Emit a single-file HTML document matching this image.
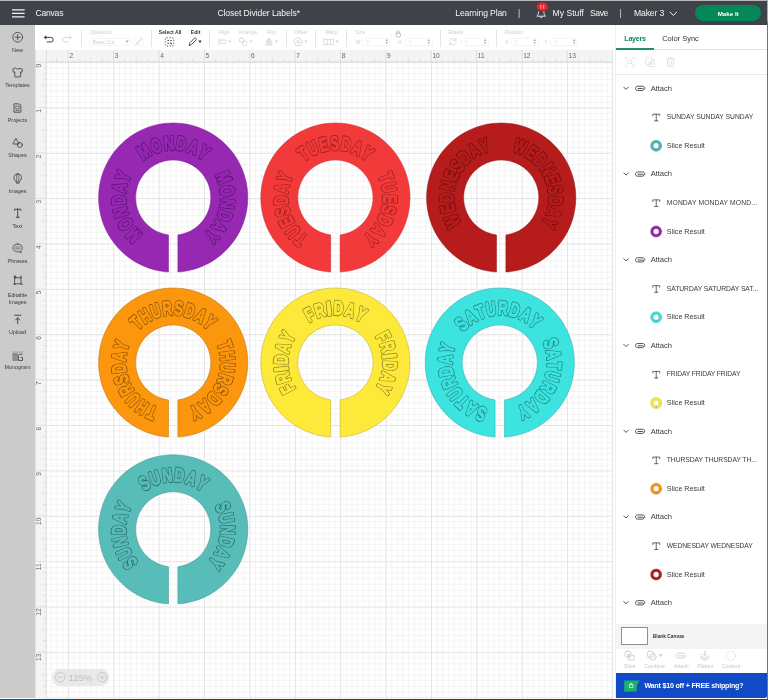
<!DOCTYPE html>
<html><head><meta charset="utf-8">
<style>
*{box-sizing:border-box;margin:0;padding:0}
html,body{width:768px;height:700px;overflow:hidden;background:#fff;-webkit-font-smoothing:antialiased;font-family:"Liberation Sans",sans-serif;}
.abs{position:absolute}
#topedge{left:0;top:0;width:768px;height:1.2px;background:#b9b9b9}
#topbar{left:0;top:1px;width:768px;height:24.4px;background:#3f4349;color:#fff}
#topbar span{position:absolute;white-space:nowrap;font-size:8.6px;line-height:10px;top:7.2px;color:#f4f4f4}
#sidebar{left:0;top:25.4px;width:35px;height:673px;background:#cbcbcb;border-right:1px solid #e3e3e3;box-sizing:content-box}
.sb{position:absolute;margin-top:-24.6px;left:0;width:35px;text-align:center;font-size:5.4px;line-height:7.4px;color:#3c3c3c}
#toolbar{left:35.4px;top:25.4px;width:579px;height:24.8px;background:#fff}
.tl{position:absolute;font-size:5.2px;line-height:6px;color:#cfcfcf;white-space:nowrap}
.tld{color:#333}
.tdiv{position:absolute;top:4.6px;width:1px;height:16.6px;background:#e4e4e4}
.tin{position:absolute;top:12.4px;height:8.4px;border:0.7px solid #f5f5f5;border-radius:1.5px}
#panel{left:615.4px;top:25.4px;width:151.6px;height:673px;background:#fff}
.row{position:absolute;left:0;width:151px;font-size:6.8px;line-height:8px;color:#3a3a3a;white-space:nowrap}
</style></head>
<body>
<div id="wrap" style="position:absolute;left:0;top:0;width:768px;height:700px;will-change:transform">
<!-- canvas -->
<svg class="abs" id="canvas" style="left:35.4px;top:50.2px" width="580" height="649" viewBox="35.4 50.2 580 649">
<defs>
<pattern id="minor" x="68.3" y="62.2" width="5.6725" height="5.6725" patternUnits="userSpaceOnUse">
<path d="M0.25 0V5.6725M0 0.25H5.6725" stroke="#e7e7e7" stroke-width="0.6" fill="none"/>
</pattern>
<pattern id="major" x="68.3" y="62.2" width="45.38" height="45.38" patternUnits="userSpaceOnUse">
<path d="M0.25 0V45.38M0 0.25H45.38" stroke="#d8d8d8" stroke-width="0.7" fill="none"/>
</pattern>
<pattern id="tickx" x="68.3" y="50.2" width="45.38" height="12.2" patternUnits="userSpaceOnUse"><path d="M5.92 10.3V12.2M11.60 8.7V12.2M17.27 10.3V12.2M22.94 7.6V12.2M28.61 10.3V12.2M34.29 8.7V12.2M39.96 10.3V12.2" stroke="#cdcdcd" stroke-width="0.6" fill="none"/></pattern>
<pattern id="ticky" x="35.4" y="62.2" width="11.4" height="45.38" patternUnits="userSpaceOnUse"><path d="M9.5 5.92H11.4M7.9 11.60H11.4M9.5 17.27H11.4M6.8 22.94H11.4M9.5 28.61H11.4M7.9 34.29H11.4M9.5 39.96H11.4" stroke="#cdcdcd" stroke-width="0.6" fill="none"/></pattern>
</defs>
<rect x="35.4" y="50.2" width="580" height="649" fill="#fff"/>
<rect x="46.8" y="62.2" width="566" height="637" fill="url(#minor)"/>
<rect x="46.8" y="62.2" width="566" height="637" fill="url(#major)"/>
<!-- rulers -->
<rect x="35.4" y="50.2" width="577.4" height="12" fill="#f4f4f4"/>
<rect x="35.4" y="50.2" width="11.4" height="649" fill="#f4f4f4"/>
<rect x="46.8" y="50.2" width="566" height="12.2" fill="url(#tickx)"/>
<rect x="35.4" y="62.2" width="11.4" height="637" fill="url(#ticky)"/>
<path d="M46.8 50.2V699M35.4 62.2H612.8" stroke="#d4d4d4" stroke-width="0.7" fill="none"/>
<path d="M612.8 50.2V699" stroke="#dedede" stroke-width="0.8"/>
<path id="majx" stroke="#d6d6d6" stroke-width="0.7" fill="none" d="M68.55 50.2V62.2M113.93 50.2V62.2M159.31 50.2V62.2M204.69 50.2V62.2M250.07 50.2V62.2M295.45 50.2V62.2M340.83 50.2V62.2M386.21 50.2V62.2M431.59 50.2V62.2M476.97 50.2V62.2M522.35 50.2V62.2M567.73 50.2V62.2M35.4 107.83H46.8M35.4 153.21H46.8M35.4 198.59H46.8M35.4 243.97H46.8M35.4 289.35H46.8M35.4 334.73H46.8M35.4 380.11H46.8M35.4 425.49H46.8M35.4 470.87H46.8M35.4 516.25H46.8M35.4 561.63H46.8M35.4 607.01H46.8M35.4 652.39H46.8"/>
<g font-size="6.6" fill="#666" font-family="Liberation Sans, sans-serif" id="rnx">
<text x="69.8" y="57.8">2</text>
<text x="115.2" y="57.8">3</text>
<text x="160.6" y="57.8">4</text>
<text x="205.9" y="57.8">5</text>
<text x="251.3" y="57.8">6</text>
<text x="296.7" y="57.8">7</text>
<text x="342.1" y="57.8">8</text>
<text x="387.5" y="57.8">9</text>
<text x="432.8" y="57.8">10</text>
<text x="478.2" y="57.8">11</text>
<text x="523.6" y="57.8">12</text>
<text x="569.0" y="57.8">13</text>
<text transform="translate(41.7 67.6) rotate(-90)">0</text>
<text transform="translate(41.7 113.0) rotate(-90)">1</text>
<text transform="translate(41.7 158.4) rotate(-90)">2</text>
<text transform="translate(41.7 203.7) rotate(-90)">3</text>
<text transform="translate(41.7 249.1) rotate(-90)">4</text>
<text transform="translate(41.7 294.5) rotate(-90)">5</text>
<text transform="translate(41.7 339.9) rotate(-90)">6</text>
<text transform="translate(41.7 385.3) rotate(-90)">7</text>
<text transform="translate(41.7 430.6) rotate(-90)">8</text>
<text transform="translate(41.7 476.0) rotate(-90)">9</text>
<text transform="translate(41.7 525.1) rotate(-90)">10</text>
<text transform="translate(41.7 570.5) rotate(-90)">11</text>
<text transform="translate(41.7 615.9) rotate(-90)">12</text>
<text transform="translate(41.7 661.2) rotate(-90)">13</text>
</g>
<!--RINGS-->
<path d="M178.30 272.25A74.6 74.6 0 1 0 168.90 272.25L168.90 235.11A37.6 37.6 0 1 1 178.30 235.11Z" fill="#9628b2" stroke="#7a1d95" stroke-width="0.5"/>
<g font-size="19.5" font-weight="bold" text-anchor="middle" font-family="Liberation Sans, sans-serif" stroke-linejoin="round">
<g id="tMON">
<text transform="translate(173.6 197.8) rotate(-133.50) translate(0 -47.8) scale(0.702 1)">M</text>
<text transform="translate(173.6 197.8) rotate(-119.00) translate(0 -47.8) scale(0.702 1)">O</text>
<text transform="translate(173.6 197.8) rotate(-105.50) translate(0 -47.8) scale(0.702 1)">N</text>
<text transform="translate(173.6 197.8) rotate(-92.51) translate(0 -47.8) scale(0.702 1)">D</text>
<text transform="translate(173.6 197.8) rotate(-79.51) translate(0 -47.8) scale(0.702 1)">A</text>
<text transform="translate(173.6 197.8) rotate(-67.00) translate(0 -47.8) scale(0.702 1)">Y</text>
<text transform="translate(173.6 197.8) rotate(-32.50) translate(0 -47.8) scale(0.702 1)">M</text>
<text transform="translate(173.6 197.8) rotate(-18.00) translate(0 -47.8) scale(0.702 1)">O</text>
<text transform="translate(173.6 197.8) rotate(-4.50) translate(0 -47.8) scale(0.702 1)">N</text>
<text transform="translate(173.6 197.8) rotate(8.49) translate(0 -47.8) scale(0.702 1)">D</text>
<text transform="translate(173.6 197.8) rotate(21.49) translate(0 -47.8) scale(0.702 1)">A</text>
<text transform="translate(173.6 197.8) rotate(34.00) translate(0 -47.8) scale(0.702 1)">Y</text>
<text transform="translate(173.6 197.8) rotate(68.50) translate(0 -47.8) scale(0.702 1)">M</text>
<text transform="translate(173.6 197.8) rotate(83.00) translate(0 -47.8) scale(0.702 1)">O</text>
<text transform="translate(173.6 197.8) rotate(96.50) translate(0 -47.8) scale(0.702 1)">N</text>
<text transform="translate(173.6 197.8) rotate(109.49) translate(0 -47.8) scale(0.702 1)">D</text>
<text transform="translate(173.6 197.8) rotate(122.49) translate(0 -47.8) scale(0.702 1)">A</text>
<text transform="translate(173.6 197.8) rotate(135.00) translate(0 -47.8) scale(0.702 1)">Y</text>
</g>
<use href="#tMON" fill="#5a1270" stroke="#5a1270" stroke-width="2.85"/>
<use href="#tMON" fill="#9628b2" stroke="#9628b2" stroke-width="1.15"/>
</g>
<path d="M340.50 272.25A74.6 74.6 0 1 0 331.10 272.25L331.10 235.11A37.6 37.6 0 1 1 340.50 235.11Z" fill="#f23a3a" stroke="#c82c2c" stroke-width="0.5"/>
<g font-size="19.5" font-weight="bold" text-anchor="middle" font-family="Liberation Sans, sans-serif" stroke-linejoin="round">
<g id="tTUE">
<text transform="translate(335.8 197.8) rotate(-140.19) translate(0 -47.8) scale(0.678 1)">T</text>
<text transform="translate(335.8 197.8) rotate(-128.62) translate(0 -47.8) scale(0.678 1)">U</text>
<text transform="translate(335.8 197.8) rotate(-116.55) translate(0 -47.8) scale(0.678 1)">E</text>
<text transform="translate(335.8 197.8) rotate(-104.97) translate(0 -47.8) scale(0.678 1)">S</text>
<text transform="translate(335.8 197.8) rotate(-92.90) translate(0 -47.8) scale(0.678 1)">D</text>
<text transform="translate(335.8 197.8) rotate(-80.36) translate(0 -47.8) scale(0.678 1)">A</text>
<text transform="translate(335.8 197.8) rotate(-68.29) translate(0 -47.8) scale(0.678 1)">Y</text>
<text transform="translate(335.8 197.8) rotate(-36.19) translate(0 -47.8) scale(0.678 1)">T</text>
<text transform="translate(335.8 197.8) rotate(-24.62) translate(0 -47.8) scale(0.678 1)">U</text>
<text transform="translate(335.8 197.8) rotate(-12.55) translate(0 -47.8) scale(0.678 1)">E</text>
<text transform="translate(335.8 197.8) rotate(-0.97) translate(0 -47.8) scale(0.678 1)">S</text>
<text transform="translate(335.8 197.8) rotate(11.10) translate(0 -47.8) scale(0.678 1)">D</text>
<text transform="translate(335.8 197.8) rotate(23.64) translate(0 -47.8) scale(0.678 1)">A</text>
<text transform="translate(335.8 197.8) rotate(35.71) translate(0 -47.8) scale(0.678 1)">Y</text>
<text transform="translate(335.8 197.8) rotate(67.81) translate(0 -47.8) scale(0.678 1)">T</text>
<text transform="translate(335.8 197.8) rotate(79.38) translate(0 -47.8) scale(0.678 1)">U</text>
<text transform="translate(335.8 197.8) rotate(91.45) translate(0 -47.8) scale(0.678 1)">E</text>
<text transform="translate(335.8 197.8) rotate(103.03) translate(0 -47.8) scale(0.678 1)">S</text>
<text transform="translate(335.8 197.8) rotate(115.10) translate(0 -47.8) scale(0.678 1)">D</text>
<text transform="translate(335.8 197.8) rotate(127.64) translate(0 -47.8) scale(0.678 1)">A</text>
<text transform="translate(335.8 197.8) rotate(139.71) translate(0 -47.8) scale(0.678 1)">Y</text>
</g>
<use href="#tTUE" fill="#9c1f1f" stroke="#9c1f1f" stroke-width="2.85"/>
<use href="#tTUE" fill="#f23a3a" stroke="#f23a3a" stroke-width="1.15"/>
</g>
<path d="M506.30 272.25A74.6 74.6 0 1 0 496.90 272.25L496.90 235.11A37.6 37.6 0 1 1 506.30 235.11Z" fill="#b71c1c" stroke="#8e1414" stroke-width="0.5"/>
<g font-size="19.5" font-weight="bold" text-anchor="middle" font-family="Liberation Sans, sans-serif" stroke-linejoin="round">
<g id="tWED">
<text transform="translate(501.6 197.8) rotate(-115.44) translate(0 -47.8) scale(0.666 1)">W</text>
<text transform="translate(501.6 197.8) rotate(-101.69) translate(0 -47.8) scale(0.666 1)">E</text>
<text transform="translate(501.6 197.8) rotate(-89.83) translate(0 -47.8) scale(0.666 1)">D</text>
<text transform="translate(501.6 197.8) rotate(-77.50) translate(0 -47.8) scale(0.666 1)">N</text>
<text transform="translate(501.6 197.8) rotate(-65.64) translate(0 -47.8) scale(0.666 1)">E</text>
<text transform="translate(501.6 197.8) rotate(-54.25) translate(0 -47.8) scale(0.666 1)">S</text>
<text transform="translate(501.6 197.8) rotate(-42.39) translate(0 -47.8) scale(0.666 1)">D</text>
<text transform="translate(501.6 197.8) rotate(-30.06) translate(0 -47.8) scale(0.666 1)">A</text>
<text transform="translate(501.6 197.8) rotate(-18.19) translate(0 -47.8) scale(0.666 1)">Y</text>
<text transform="translate(501.6 197.8) rotate(20.56) translate(0 -47.8) scale(0.666 1)">W</text>
<text transform="translate(501.6 197.8) rotate(34.31) translate(0 -47.8) scale(0.666 1)">E</text>
<text transform="translate(501.6 197.8) rotate(46.17) translate(0 -47.8) scale(0.666 1)">D</text>
<text transform="translate(501.6 197.8) rotate(58.50) translate(0 -47.8) scale(0.666 1)">N</text>
<text transform="translate(501.6 197.8) rotate(70.36) translate(0 -47.8) scale(0.666 1)">E</text>
<text transform="translate(501.6 197.8) rotate(81.75) translate(0 -47.8) scale(0.666 1)">S</text>
<text transform="translate(501.6 197.8) rotate(93.61) translate(0 -47.8) scale(0.666 1)">D</text>
<text transform="translate(501.6 197.8) rotate(105.94) translate(0 -47.8) scale(0.666 1)">A</text>
<text transform="translate(501.6 197.8) rotate(117.81) translate(0 -47.8) scale(0.666 1)">Y</text>
</g>
<use href="#tWED" fill="#6e0d0d" stroke="#6e0d0d" stroke-width="2.85"/>
<use href="#tWED" fill="#b71c1c" stroke="#b71c1c" stroke-width="1.15"/>
</g>
<path d="M178.30 437.25A74.6 74.6 0 1 0 168.90 437.25L168.90 400.11A37.6 37.6 0 1 1 178.30 400.11Z" fill="#fc960c" stroke="#b86c08" stroke-width="0.5"/>
<g font-size="19.5" font-weight="bold" text-anchor="middle" font-family="Liberation Sans, sans-serif" stroke-linejoin="round">
<g id="tTHU">
<text transform="translate(173.6 362.8) rotate(-156.72) translate(0 -47.8) scale(0.674 1)">T</text>
<text transform="translate(173.6 362.8) rotate(-145.21) translate(0 -47.8) scale(0.674 1)">H</text>
<text transform="translate(173.6 362.8) rotate(-132.73) translate(0 -47.8) scale(0.674 1)">U</text>
<text transform="translate(173.6 362.8) rotate(-120.25) translate(0 -47.8) scale(0.674 1)">R</text>
<text transform="translate(173.6 362.8) rotate(-108.25) translate(0 -47.8) scale(0.674 1)">S</text>
<text transform="translate(173.6 362.8) rotate(-96.24) translate(0 -47.8) scale(0.674 1)">D</text>
<text transform="translate(173.6 362.8) rotate(-83.76) translate(0 -47.8) scale(0.674 1)">A</text>
<text transform="translate(173.6 362.8) rotate(-71.76) translate(0 -47.8) scale(0.674 1)">Y</text>
<text transform="translate(173.6 362.8) rotate(-42.72) translate(0 -47.8) scale(0.674 1)">T</text>
<text transform="translate(173.6 362.8) rotate(-31.21) translate(0 -47.8) scale(0.674 1)">H</text>
<text transform="translate(173.6 362.8) rotate(-18.73) translate(0 -47.8) scale(0.674 1)">U</text>
<text transform="translate(173.6 362.8) rotate(-6.25) translate(0 -47.8) scale(0.674 1)">R</text>
<text transform="translate(173.6 362.8) rotate(5.75) translate(0 -47.8) scale(0.674 1)">S</text>
<text transform="translate(173.6 362.8) rotate(17.76) translate(0 -47.8) scale(0.674 1)">D</text>
<text transform="translate(173.6 362.8) rotate(30.24) translate(0 -47.8) scale(0.674 1)">A</text>
<text transform="translate(173.6 362.8) rotate(42.24) translate(0 -47.8) scale(0.674 1)">Y</text>
<text transform="translate(173.6 362.8) rotate(71.28) translate(0 -47.8) scale(0.674 1)">T</text>
<text transform="translate(173.6 362.8) rotate(82.79) translate(0 -47.8) scale(0.674 1)">H</text>
<text transform="translate(173.6 362.8) rotate(95.27) translate(0 -47.8) scale(0.674 1)">U</text>
<text transform="translate(173.6 362.8) rotate(107.75) translate(0 -47.8) scale(0.674 1)">R</text>
<text transform="translate(173.6 362.8) rotate(119.75) translate(0 -47.8) scale(0.674 1)">S</text>
<text transform="translate(173.6 362.8) rotate(131.76) translate(0 -47.8) scale(0.674 1)">D</text>
<text transform="translate(173.6 362.8) rotate(144.24) translate(0 -47.8) scale(0.674 1)">A</text>
<text transform="translate(173.6 362.8) rotate(156.24) translate(0 -47.8) scale(0.674 1)">Y</text>
</g>
<use href="#tTHU" fill="#8a5208" stroke="#8a5208" stroke-width="2.85"/>
<use href="#tTHU" fill="#fc960c" stroke="#fc960c" stroke-width="1.15"/>
</g>
<path d="M340.50 437.25A74.6 74.6 0 1 0 331.10 437.25L331.10 400.11A37.6 37.6 0 1 1 340.50 400.11Z" fill="#fde93a" stroke="#b9aa28" stroke-width="0.5"/>
<g font-size="19.5" font-weight="bold" text-anchor="middle" font-family="Liberation Sans, sans-serif" stroke-linejoin="round">
<g id="tFRI">
<text transform="translate(335.8 362.8) rotate(-118.63) translate(0 -47.8) scale(0.687 1)">F</text>
<text transform="translate(335.8 362.8) rotate(-106.90) translate(0 -47.8) scale(0.687 1)">R</text>
<text transform="translate(335.8 362.8) rotate(-96.85) translate(0 -47.8) scale(0.927 1)">I</text>
<text transform="translate(335.8 362.8) rotate(-86.80) translate(0 -47.8) scale(0.687 1)">D</text>
<text transform="translate(335.8 362.8) rotate(-74.09) translate(0 -47.8) scale(0.687 1)">A</text>
<text transform="translate(335.8 362.8) rotate(-61.87) translate(0 -47.8) scale(0.687 1)">Y</text>
<text transform="translate(335.8 362.8) rotate(-28.63) translate(0 -47.8) scale(0.687 1)">F</text>
<text transform="translate(335.8 362.8) rotate(-16.90) translate(0 -47.8) scale(0.687 1)">R</text>
<text transform="translate(335.8 362.8) rotate(-6.85) translate(0 -47.8) scale(0.927 1)">I</text>
<text transform="translate(335.8 362.8) rotate(3.20) translate(0 -47.8) scale(0.687 1)">D</text>
<text transform="translate(335.8 362.8) rotate(15.91) translate(0 -47.8) scale(0.687 1)">A</text>
<text transform="translate(335.8 362.8) rotate(28.13) translate(0 -47.8) scale(0.687 1)">Y</text>
<text transform="translate(335.8 362.8) rotate(61.37) translate(0 -47.8) scale(0.687 1)">F</text>
<text transform="translate(335.8 362.8) rotate(73.10) translate(0 -47.8) scale(0.687 1)">R</text>
<text transform="translate(335.8 362.8) rotate(83.15) translate(0 -47.8) scale(0.927 1)">I</text>
<text transform="translate(335.8 362.8) rotate(93.20) translate(0 -47.8) scale(0.687 1)">D</text>
<text transform="translate(335.8 362.8) rotate(105.91) translate(0 -47.8) scale(0.687 1)">A</text>
<text transform="translate(335.8 362.8) rotate(118.13) translate(0 -47.8) scale(0.687 1)">Y</text>
</g>
<use href="#tFRI" fill="#8f8420" stroke="#8f8420" stroke-width="2.85"/>
<use href="#tFRI" fill="#fde93a" stroke="#fde93a" stroke-width="1.15"/>
</g>
<path d="M504.90 437.25A74.6 74.6 0 1 0 495.50 437.25L495.50 400.11A37.6 37.6 0 1 1 504.90 400.11Z" fill="#3de3df" stroke="#2aa9a6" stroke-width="0.5"/>
<g font-size="19.5" font-weight="bold" text-anchor="middle" font-family="Liberation Sans, sans-serif" stroke-linejoin="round">
<g id="tSAT">
<text transform="translate(500.2 362.8) rotate(-160.18) translate(0 -47.8) scale(0.681 1)">S</text>
<text transform="translate(500.2 362.8) rotate(-148.05) translate(0 -47.8) scale(0.681 1)">A</text>
<text transform="translate(500.2 362.8) rotate(-136.41) translate(0 -47.8) scale(0.681 1)">T</text>
<text transform="translate(500.2 362.8) rotate(-124.78) translate(0 -47.8) scale(0.681 1)">U</text>
<text transform="translate(500.2 362.8) rotate(-112.17) translate(0 -47.8) scale(0.681 1)">R</text>
<text transform="translate(500.2 362.8) rotate(-99.56) translate(0 -47.8) scale(0.681 1)">D</text>
<text transform="translate(500.2 362.8) rotate(-86.95) translate(0 -47.8) scale(0.681 1)">A</text>
<text transform="translate(500.2 362.8) rotate(-74.82) translate(0 -47.8) scale(0.681 1)">Y</text>
<text transform="translate(500.2 362.8) rotate(-44.68) translate(0 -47.8) scale(0.681 1)">S</text>
<text transform="translate(500.2 362.8) rotate(-32.55) translate(0 -47.8) scale(0.681 1)">A</text>
<text transform="translate(500.2 362.8) rotate(-20.91) translate(0 -47.8) scale(0.681 1)">T</text>
<text transform="translate(500.2 362.8) rotate(-9.28) translate(0 -47.8) scale(0.681 1)">U</text>
<text transform="translate(500.2 362.8) rotate(3.33) translate(0 -47.8) scale(0.681 1)">R</text>
<text transform="translate(500.2 362.8) rotate(15.94) translate(0 -47.8) scale(0.681 1)">D</text>
<text transform="translate(500.2 362.8) rotate(28.55) translate(0 -47.8) scale(0.681 1)">A</text>
<text transform="translate(500.2 362.8) rotate(40.68) translate(0 -47.8) scale(0.681 1)">Y</text>
<text transform="translate(500.2 362.8) rotate(69.32) translate(0 -47.8) scale(0.681 1)">S</text>
<text transform="translate(500.2 362.8) rotate(81.45) translate(0 -47.8) scale(0.681 1)">A</text>
<text transform="translate(500.2 362.8) rotate(93.09) translate(0 -47.8) scale(0.681 1)">T</text>
<text transform="translate(500.2 362.8) rotate(104.72) translate(0 -47.8) scale(0.681 1)">U</text>
<text transform="translate(500.2 362.8) rotate(117.33) translate(0 -47.8) scale(0.681 1)">R</text>
<text transform="translate(500.2 362.8) rotate(129.94) translate(0 -47.8) scale(0.681 1)">D</text>
<text transform="translate(500.2 362.8) rotate(142.55) translate(0 -47.8) scale(0.681 1)">A</text>
<text transform="translate(500.2 362.8) rotate(154.68) translate(0 -47.8) scale(0.681 1)">Y</text>
</g>
<use href="#tSAT" fill="#1f8684" stroke="#1f8684" stroke-width="2.85"/>
<use href="#tSAT" fill="#3de3df" stroke="#3de3df" stroke-width="1.15"/>
</g>
<path d="M178.30 604.05A74.6 74.6 0 1 0 168.90 604.05L168.90 566.91A37.6 37.6 0 1 1 178.30 566.91Z" fill="#58bdb9" stroke="#3f8f8c" stroke-width="0.5"/>
<g font-size="19.5" font-weight="bold" text-anchor="middle" font-family="Liberation Sans, sans-serif" stroke-linejoin="round">
<g id="tSUN">
<text transform="translate(173.6 529.6) rotate(-128.16) translate(0 -47.8) scale(0.684 1)">S</text>
<text transform="translate(173.6 529.6) rotate(-115.98) translate(0 -47.8) scale(0.684 1)">U</text>
<text transform="translate(173.6 529.6) rotate(-103.33) translate(0 -47.8) scale(0.684 1)">N</text>
<text transform="translate(173.6 529.6) rotate(-90.67) translate(0 -47.8) scale(0.684 1)">D</text>
<text transform="translate(173.6 529.6) rotate(-78.02) translate(0 -47.8) scale(0.684 1)">A</text>
<text transform="translate(173.6 529.6) rotate(-65.84) translate(0 -47.8) scale(0.684 1)">Y</text>
<text transform="translate(173.6 529.6) rotate(-32.00) translate(0 -47.8) scale(0.702 1)">S</text>
<text transform="translate(173.6 529.6) rotate(-19.50) translate(0 -47.8) scale(0.702 1)">U</text>
<text transform="translate(173.6 529.6) rotate(-6.50) translate(0 -47.8) scale(0.702 1)">N</text>
<text transform="translate(173.6 529.6) rotate(6.50) translate(0 -47.8) scale(0.702 1)">D</text>
<text transform="translate(173.6 529.6) rotate(19.50) translate(0 -47.8) scale(0.702 1)">A</text>
<text transform="translate(173.6 529.6) rotate(32.00) translate(0 -47.8) scale(0.702 1)">Y</text>
<text transform="translate(173.6 529.6) rotate(65.84) translate(0 -47.8) scale(0.684 1)">S</text>
<text transform="translate(173.6 529.6) rotate(78.02) translate(0 -47.8) scale(0.684 1)">U</text>
<text transform="translate(173.6 529.6) rotate(90.67) translate(0 -47.8) scale(0.684 1)">N</text>
<text transform="translate(173.6 529.6) rotate(103.33) translate(0 -47.8) scale(0.684 1)">D</text>
<text transform="translate(173.6 529.6) rotate(115.98) translate(0 -47.8) scale(0.684 1)">A</text>
<text transform="translate(173.6 529.6) rotate(128.16) translate(0 -47.8) scale(0.684 1)">Y</text>
</g>
<use href="#tSUN" fill="#2c6e6b" stroke="#2c6e6b" stroke-width="2.85"/>
<use href="#tSUN" fill="#58bdb9" stroke="#58bdb9" stroke-width="1.15"/>
</g>

<!--/RINGS-->
</svg>

<div class="abs" style="left:51.6px;top:669.4px;width:57.8px;height:16.4px;border-radius:8.2px;background:rgba(228,228,228,0.82)"></div>
<svg class="abs" style="left:51.6px;top:669.4px" width="58" height="17" viewBox="51.6 669.4 58 17" fill="none" stroke="#c2c2c2" stroke-width="0.8"><circle cx="59.8" cy="677.6" r="4.7"/><path d="M57.4 677.6H62.2"/><circle cx="101.9" cy="677.6" r="4.7"/><path d="M99.5 677.6H104.3M101.9 675.2V680"/></svg>
<div class="row" style="left:68.4px;top:672.7px;width:auto;font-size:9.3px;line-height:10px;color:#bdbdbd">125%</div>
<div class="abs" id="topedge"></div>
<div class="abs" id="topbar">
<svg class="abs" style="left:11.5px;top:7.8px" width="13" height="9" viewBox="0 0 13 9"><path d="M0 0.9H12.6M0 4.4H12.6M0 7.9H12.6" stroke="#f2f2f2" stroke-width="1.3"/></svg>
<span style="letter-spacing:-0.22px;left:35.4px">Canvas</span>
<span style="letter-spacing:-0.09px;left:217.4px">Closet Divider Labels*</span>
<span style="left:455.3px;letter-spacing:-0.12px">Learning Plan</span>
<span style="left:518px;color:#ddd">|</span>
<svg class="abs" style="left:534px;top:0px" width="18" height="20" viewBox="534 1 18 20" fill="none"><path d="M538.6 11.4C538.6 14 537.6 15.6 536.8 16.2H545.6C544.8 15.6 543.8 14 543.8 11.4M540 16.6C540.4 18 542 18 542.4 16.6" stroke="#f0f0f0" stroke-width="0.9" stroke-linejoin="round"/><ellipse cx="542.3" cy="6.8" rx="5.8" ry="4.3" fill="#e8232a"/><path d="M540.9 4.9V8.7M543.7 4.9V8.7" stroke="#f3c9b5" stroke-width="0.9"/></svg>
<span style="left:552.6px">My Stuff</span>
<span style="letter-spacing:-0.4px;left:590px">Save</span>
<span style="left:619.6px;color:#ddd">|</span>
<span style="letter-spacing:-0.14px;left:634px">Maker 3</span>
<svg class="abs" style="left:668.5px;top:9.8px" width="9" height="6" viewBox="0 0 9 6"><path d="M0.8 0.8L4.4 4.4L8 0.8" stroke="#eee" stroke-width="1" fill="none"/></svg>
<div class="abs" style="left:695px;top:4px;width:66.4px;height:16px;border-radius:8px;background:#05875a"></div>
<span style="left:695px;width:66.4px;text-align:center;font-weight:bold;font-size:6.2px;color:#fff;top:7.8px">Make It</span>
</div>

<div class="abs" id="sidebar">
<svg class="abs" style="left:0;top:0" width="35.4" height="360" viewBox="0 25.4 35.4 360" fill="none" stroke="#3a3a3a" stroke-width="0.8" stroke-linecap="round" stroke-linejoin="round">
<!-- New -->
<circle cx="17.7" cy="37.6" r="4.9"/><path d="M17.7 35V40.2M15.1 37.6H20.3"/>
<!-- Templates -->
<path d="M15.4 68.6C16.4 69.6 19 69.6 20 68.6L22.6 69.9L21.9 72.6L20.6 72.2V77.3H14.8V72.2L13.5 72.6L12.8 69.9Z"/>
<!-- Projects -->
<path d="M14.4 104.2H18.6L20.9 105.5V112.6H14.4Z"/><rect x="16.2" y="106.4" width="2.9" height="2.9" stroke-width="0.6"/><path d="M15.9 110.9H19.4" stroke-width="0.6"/>
<!-- Shapes -->
<path d="M16.2 139.2L19.2 144.4H13.2Z"/><circle cx="19.8" cy="145.3" r="2.5"/>
<!-- Images -->
<path d="M17.7 174.3C20.2 174.3 21.5 176 21.5 178C21.5 180 19.6 181.4 19.2 182.6H16.2C15.8 181.4 13.9 180 13.9 178C13.9 176 15.2 174.3 17.7 174.3Z"/><path d="M16.6 174.6V182.4M18.8 174.6V182.4M16.3 183.7H19.1" stroke-width="0.6"/>
<!-- Text -->
<path d="M14.5 210.8V209.6H20.9V210.8M17.7 209.6V217.6M16.2 217.7H19.2" stroke-width="0.9"/>
<!-- Phrases -->
<path d="M17.6 244.4C20.4 244.4 22.2 246 22.2 248.3C22.2 249.6 21.6 250.6 20.7 251.3L21.2 253.2L19.2 252.1C18.7 252.2 18.2 252.3 17.6 252.3C14.8 252.3 13 250.6 13 248.3C13 246 14.8 244.4 17.6 244.4Z"/><path d="M15.3 247.4H19.9M15.3 249.3H19.9" stroke-width="0.6"/>
<!-- Editable -->
<rect x="15" y="278.2" width="6" height="6" /><path d="M13.7 284.6H15.3M20.9 284.6H22.4M21 276.6V278.4M15 276.2V278.6M13.9 277.4H16.1" stroke-width="1"/>
<!-- Upload -->
<path d="M14.6 315.7H20.8M17.7 324V318.4M15.6 320.4L17.7 318.3L19.8 320.4" stroke-width="0.9"/>
<!-- Monogram -->
<path d="M12.7 352.5H22.6" stroke="#8a8a8a" stroke-width="0.7"/><path d="M12.3 354H17.9V361.4H12.3Z" fill="#8d8d8d" stroke="none"/><path d="M12.8 354.5H17" stroke="#6a6a6a" stroke-width="0.7"/><path d="M22.6 354.7H19.6C18.8 354.7 18.5 355.1 18.5 355.8V360.9H22.5V357.8H20.7" stroke="#555" stroke-width="1" stroke-linecap="butt"/>
</svg>
<div class="sb" style="top:45.9px">New</div>
<div class="sb" style="top:81.3px">Templates</div>
<div class="sb" style="top:116.3px">Projects</div>
<div class="sb" style="top:151.7px">Shapes</div>
<div class="sb" style="top:187.1px">Images</div>
<div class="sb" style="top:222.5px">Text</div>
<div class="sb" style="top:257.7px">Phrases</div>
<div class="sb" style="top:291.1px">Editable<br>Images</div>
<div class="sb" style="top:328.4px">Upload</div>
<div class="sb" style="top:363.5px">Monogram</div>
</div>
<div class="abs" id="toolbar">
<svg class="abs" style="left:0;top:0" width="579" height="24.8" viewBox="35.4 25.4 579 24.8" fill="none" stroke-linecap="round" stroke-linejoin="round">
<!-- undo / redo -->
<path d="M46.2 37.8H51.3A2.3 2.3 0 0 1 51.3 42.4H47.6" stroke="#3a3a3a" stroke-width="0.95"/><path d="M44 37.8L46.7 35.6V40Z" fill="#3a3a3a" stroke="none"/>
<path d="M70.4 37.8H65.3A2.3 2.3 0 0 0 65.3 42.4H69" stroke="#d6d6d6" stroke-width="0.95"/><path d="M72.6 37.8L69.9 35.6V40Z" fill="#dcdcdc" stroke="none"/>
<!-- swatch -->
<rect x="134.8" y="37.8" width="9" height="8.4" rx="1" stroke="#f0f0f0" stroke-width="0.7"/>
<path d="M136.3 44.9L142.4 39" stroke="#cdbd94" stroke-width="0.9"/>
<path d="M125.9 40.9H129.1L127.5 43.6Z" fill="#b5b5b5" stroke="none"/>
<!-- select all -->
<rect x="165.7" y="38.2" width="8.4" height="8.2" rx="1.2" stroke="#333" stroke-width="0.8" stroke-dasharray="1.3 1.5" stroke-linecap="butt"/>
<g fill="#3a3a3a" stroke="none"><circle cx="168.5" cy="40.9" r="0.75"/><circle cx="171.3" cy="40.9" r="0.75"/><circle cx="168.5" cy="43.7" r="0.75"/><circle cx="171.3" cy="43.7" r="0.75"/><path d="M170.8 43.4L172.6 44.2L171.6 45.2Z"/></g>
<!-- edit pencil -->
<path d="M189.6 45.6L190.3 43.2L194.9 38.6C195.7 37.8 197.4 39.4 196.6 40.2L192 44.8Z" stroke="#333" stroke-width="0.85"/>
<path d="M198.8 40.9H202.0L200.4 43.6Z" fill="#333" stroke="none"/>
<!-- align -->
<g stroke="#d2d2d2" stroke-width="0.75">
<path d="M219.2 38.6V45.6"/><rect x="220.9" y="40.4" width="5.2" height="3.4" rx="0.5"/>
<!-- arrange -->
<rect x="240" y="38.6" width="4.3" height="4.3" rx="1.2"/><rect x="242.8" y="41.6" width="4.3" height="4.3" rx="1.2"/>
<!-- flip -->
<path d="M269.4 38.3V46M268.1 39.6L266.1 45.4H268.1ZM270.7 39.6L272.7 45.4H270.7Z"/>
<!-- offset -->
<path d="M298.8 38L303.2 41.2L301.6 46H296L294.4 41.2Z"/><circle cx="298.8" cy="42.4" r="1.5"/>
<!-- warp -->
<path d="M324.6 39.4C327 40.4 331.4 40.4 333.8 39.4V45.4C331.4 44.4 327 44.4 324.6 45.4ZM327.6 40V44.8M330.8 40V44.8"/>
<!-- rotate -->
<path d="M450 41.2C450.6 38.4 455 38 456.2 40.6M456.4 38.8V40.8H454.4M456.4 43.2C455.8 46 451.4 46.4 450.2 43.8M450 45.6V43.6H452"/>
<!-- lock -->
<rect x="396.4" y="33.6" width="4.4" height="3.7" rx="0.6" stroke="#b4b4b4"/><path d="M397.4 33.5V32.4C397.4 30.6 399.8 30.6 399.8 32.4V33.5" stroke="#b4b4b4"/>
<path d="M391.2 35.4H392.4M404 35.4H405.2" stroke="#d8d8d8" stroke-width="0.5"/>
</g>
<g fill="#d6d6d6" stroke="none">
<path d="M228.4 40.9H231.6L230.0 43.6Z"/><path d="M249.6 40.9H252.8L251.2 43.6Z"/><path d="M275.2 40.9H278.4L276.8 43.6Z"/><path d="M304.6 40.9H307.8L306.2 43.6Z"/><path d="M335.8 40.9H339.0L337.4 43.6Z"/>
</g>
<!-- spinners -->
<g fill="#a8a8a8" stroke="none">
<path d="M385.9 41.3L387.2 39.5L388.5 41.3ZM385.9 42.7L387.2 44.5L388.5 42.7Z"/>
<path d="M427.9 41.3L429.2 39.5L430.5 41.3ZM427.9 42.7L429.2 44.5L430.5 42.7Z"/>
<path d="M484.3 41.3L485.6 39.5L486.9 41.3ZM484.3 42.7L485.6 44.5L486.9 42.7Z"/>
<path d="M533.9 41.3L535.2 39.5L536.5 41.3ZM533.9 42.7L535.2 44.5L536.5 42.7Z"/>
<path d="M573.3 41.3L574.6 39.5L575.9 41.3ZM573.3 42.7L574.6 44.5L575.9 42.7Z"/>
</g>
</svg>
<div class="tdiv" style="left:45.4px"></div>
<div class="tdiv" style="left:115.7px"></div>
<div class="tdiv" style="left:173.5px"></div>
<div class="tdiv" style="left:250.3px"></div>
<div class="tdiv" style="left:279.6px"></div>
<div class="tdiv" style="left:310.8px"></div>
<div class="tdiv" style="left:404.4px"></div>
<div class="tdiv" style="left:460.6px"></div>
<div class="tl" style="left:54.2px;top:3.9px">Operation</div>
<div class="tin" style="left:54px;width:42px"></div>
<div class="tl" style="left:57px;top:13.7px">Basic Cut</div>
<div class="tl tld" style="left:123.4px;top:3.9px;font-weight:bold;font-size:5.1px">Select All</div>
<div class="tl tld" style="left:155.4px;top:3.9px;font-weight:bold;font-size:5.1px">Edit</div>
<div class="tl" style="left:182.8px;top:3.9px">Align</div>
<div class="tl" style="left:203.2px;top:3.9px">Arrange</div>
<div class="tl" style="left:231.8px;top:3.9px">Flip</div>
<div class="tl" style="left:258.4px;top:3.9px">Offset</div>
<div class="tl" style="left:290px;top:3.9px">Warp</div>
<div class="tl" style="left:330.6px;top:13.7px;color:#e6e6e6">0</div>
<div class="tl" style="left:373.2px;top:13.7px;color:#e6e6e6">0</div>
<div class="tl" style="left:429.2px;top:13.7px;color:#e6e6e6">0</div>
<div class="tl" style="left:479.6px;top:13.7px;color:#e6e6e6">0</div>
<div class="tl" style="left:519.0px;top:13.7px;color:#e6e6e6">0</div>
<div class="tl" style="left:319.6px;top:3.9px">Size</div>
<div class="tl" style="left:320px;top:13.7px">W</div>
<div class="tin" style="left:326.6px;width:27.6px"></div>
<div class="tl" style="left:362.6px;top:13.7px">H</div>
<div class="tin" style="left:369.6px;width:27.6px"></div>
<div class="tl" style="left:412.8px;top:3.9px">Rotate</div>
<div class="tin" style="left:425.2px;width:28.6px"></div>
<div class="tl" style="left:469px;top:3.9px">Position</div>
<div class="tl" style="left:469.6px;top:13.7px">X</div>
<div class="tin" style="left:475.6px;width:27.6px"></div>
<div class="tl" style="left:508.8px;top:13.7px">Y</div>
<div class="tin" style="left:514.6px;width:28px"></div>
</div>
<div class="abs" id="panel"></div>
<div class="abs" style="left:615px;top:25.4px;width:1px;height:673px;background:#f0f0f0"></div>
<!-- tabs -->
<div class="row" style="left:624.3px;top:34.6px;font-size:7.2px;letter-spacing:-0.3px;font-weight:bold;color:#17866a">Layers</div>
<div class="row" style="left:662.2px;top:34.6px;font-size:7.5px;color:#333">Color Sync</div>
<div class="abs" style="left:615.4px;top:49.1px;width:151.6px;height:0.8px;background:#e2e2e2"></div>
<div class="abs" style="left:616px;top:48px;width:38px;height:2px;background:#1f8c70"></div>
<div class="abs" style="left:615.4px;top:73.8px;width:151.6px;height:0.8px;background:#e8e8e8"></div>
<svg class="abs" style="left:615.4px;top:50px" width="151.6" height="24" viewBox="615.4 50 151.6 24" fill="none" stroke="#dcdcdc" stroke-width="0.8" stroke-linecap="round" stroke-linejoin="round">
<path d="M626 59.4V57.6H627.8M633 57.6H634.8V59.4M634.8 64.6V66.4H633M627.8 66.4H626V64.6"/><circle cx="630.2" cy="61.8" r="2"/><path d="M631.7 63.3L633 64.6"/>
<rect x="646.2" y="57.4" width="6" height="7" rx="0.8"/><path d="M648.4 64.6V66.6H654.6V59.6H652.4M650.6 61.4V64.4M649.1 62.9H652.1"/>
<path d="M666.6 59.2H675.2M669.2 59V57.6H672.6V59M667.6 59.4L668.2 66.4H673.6L674.2 59.4M669.8 61V64.6M672 61V64.6"/>
</svg>
<svg class="abs" style="left:615.4px;top:74.5px" width="151.6" height="549" viewBox="615.4 74.5 151.6 549" fill="none" stroke-linecap="round" stroke-linejoin="round">
<path d="M624.2 86.7L626.4 88.9L628.6 86.7" stroke="#4a4a4a" stroke-width="0.95"/>
<path d="M638.4 88.05H643C644.4 88.05 644.4 89.95 643 89.95H638C635.2 89.95 635.2 85.75 638 85.75H642.6C645.8 85.75 645.8 88.75 644.4 88.95" stroke="#4a4a4a" stroke-width="0.95"/>
<path d="M653.2 115.3V113.7H660.1V115.3M656.65 113.7V120.2M655 120.3H658.3" stroke="#444" stroke-width="0.8"/>
<circle cx="656.55" cy="145.3" r="4.2" stroke="#4fb8b4" stroke-width="3"/>
<circle cx="656.55" cy="145.3" r="5.65" stroke="#000" stroke-opacity="0.22" stroke-width="0.4"/>
<circle cx="656.55" cy="145.3" r="2.7" stroke="#000" stroke-opacity="0.2" stroke-width="0.4"/>
<path d="M656.55 148.1V149.9" stroke="#7a7a7a" stroke-width="0.7" stroke-linecap="butt"/>
<path d="M624.2 172.4L626.4 174.6L628.6 172.4" stroke="#4a4a4a" stroke-width="0.95"/>
<path d="M638.4 173.79H643C644.4 173.79 644.4 175.69 643 175.69H638C635.2 175.69 635.2 171.49 638 171.49H642.6C645.8 171.49 645.8 174.49 644.4 174.69" stroke="#4a4a4a" stroke-width="0.95"/>
<path d="M653.2 201.0V199.4H660.1V201.0M656.65 199.4V205.9M655 206.0H658.3" stroke="#444" stroke-width="0.8"/>
<circle cx="656.55" cy="231.0" r="4.2" stroke="#9428b0" stroke-width="3"/>
<circle cx="656.55" cy="231.0" r="5.65" stroke="#000" stroke-opacity="0.22" stroke-width="0.4"/>
<circle cx="656.55" cy="231.0" r="2.7" stroke="#000" stroke-opacity="0.2" stroke-width="0.4"/>
<path d="M656.55 233.8V235.6" stroke="#7a7a7a" stroke-width="0.7" stroke-linecap="butt"/>
<path d="M624.2 258.2L626.4 260.4L628.6 258.2" stroke="#4a4a4a" stroke-width="0.95"/>
<path d="M638.4 259.53H643C644.4 259.53 644.4 261.43 643 261.43H638C635.2 261.43 635.2 257.23 638 257.23H642.6C645.8 257.23 645.8 260.23 644.4 260.43" stroke="#4a4a4a" stroke-width="0.95"/>
<path d="M653.2 286.8V285.2H660.1V286.8M656.65 285.2V291.7M655 291.8H658.3" stroke="#444" stroke-width="0.8"/>
<circle cx="656.55" cy="316.7" r="4.2" stroke="#3fe0dc" stroke-width="3"/>
<circle cx="656.55" cy="316.7" r="5.65" stroke="#000" stroke-opacity="0.22" stroke-width="0.4"/>
<circle cx="656.55" cy="316.7" r="2.7" stroke="#000" stroke-opacity="0.2" stroke-width="0.4"/>
<path d="M656.55 319.5V321.3" stroke="#7a7a7a" stroke-width="0.7" stroke-linecap="butt"/>
<path d="M624.2 343.9L626.4 346.1L628.6 343.9" stroke="#4a4a4a" stroke-width="0.95"/>
<path d="M638.4 345.27H643C644.4 345.27 644.4 347.17 643 347.17H638C635.2 347.17 635.2 342.97 638 342.97H642.6C645.8 342.97 645.8 345.97 644.4 346.17" stroke="#4a4a4a" stroke-width="0.95"/>
<path d="M653.2 372.5V370.9H660.1V372.5M656.65 370.9V377.4M655 377.5H658.3" stroke="#444" stroke-width="0.8"/>
<circle cx="656.55" cy="402.5" r="4.2" stroke="#fbe739" stroke-width="3"/>
<circle cx="656.55" cy="402.5" r="5.65" stroke="#000" stroke-opacity="0.22" stroke-width="0.4"/>
<circle cx="656.55" cy="402.5" r="2.7" stroke="#000" stroke-opacity="0.2" stroke-width="0.4"/>
<path d="M656.55 405.3V407.1" stroke="#7a7a7a" stroke-width="0.7" stroke-linecap="butt"/>
<path d="M624.2 429.7L626.4 431.9L628.6 429.7" stroke="#4a4a4a" stroke-width="0.95"/>
<path d="M638.4 431.01H643C644.4 431.01 644.4 432.91 643 432.91H638C635.2 432.91 635.2 428.71 638 428.71H642.6C645.8 428.71 645.8 431.71 644.4 431.91" stroke="#4a4a4a" stroke-width="0.95"/>
<path d="M653.2 458.2V456.6H660.1V458.2M656.65 456.6V463.1M655 463.2H658.3" stroke="#444" stroke-width="0.8"/>
<circle cx="656.55" cy="488.2" r="4.2" stroke="#fb960e" stroke-width="3"/>
<circle cx="656.55" cy="488.2" r="5.65" stroke="#000" stroke-opacity="0.22" stroke-width="0.4"/>
<circle cx="656.55" cy="488.2" r="2.7" stroke="#000" stroke-opacity="0.2" stroke-width="0.4"/>
<path d="M656.55 491.0V492.8" stroke="#7a7a7a" stroke-width="0.7" stroke-linecap="butt"/>
<path d="M624.2 515.4L626.4 517.6L628.6 515.4" stroke="#4a4a4a" stroke-width="0.95"/>
<path d="M638.4 516.75H643C644.4 516.75 644.4 518.65 643 518.65H638C635.2 518.65 635.2 514.45 638 514.45H642.6C645.8 514.45 645.8 517.45 644.4 517.65" stroke="#4a4a4a" stroke-width="0.95"/>
<path d="M653.2 544.0V542.4H660.1V544.0M656.65 542.4V548.9M655 549.0H658.3" stroke="#444" stroke-width="0.8"/>
<circle cx="656.55" cy="574.0" r="4.2" stroke="#b71c1c" stroke-width="3"/>
<circle cx="656.55" cy="574.0" r="5.65" stroke="#000" stroke-opacity="0.22" stroke-width="0.4"/>
<circle cx="656.55" cy="574.0" r="2.7" stroke="#000" stroke-opacity="0.2" stroke-width="0.4"/>
<path d="M656.55 576.8V578.6" stroke="#7a7a7a" stroke-width="0.7" stroke-linecap="butt"/>
<path d="M624.2 601.1L626.4 603.3L628.6 601.1" stroke="#4a4a4a" stroke-width="0.95"/>
<path d="M638.4 602.49H643C644.4 602.49 644.4 604.39 643 604.39H638C635.2 604.39 635.2 600.19 638 600.19H642.6C645.8 600.19 645.8 603.19 644.4 603.39" stroke="#4a4a4a" stroke-width="0.95"/>
</svg>
<div class="row" style="left:650.7px;top:84.6px;font-size:7.55px;letter-spacing:-0.05px">Attach</div>
<div class="row" style="left:666.8px;top:113.0px;font-size:6.75px">SUNDAY SUNDAY SUNDAY</div>
<div class="row" style="left:666.8px;top:142.0px;font-size:7.2px">Slice Result</div>
<div class="row" style="left:650.7px;top:170.3px;font-size:7.55px;letter-spacing:-0.05px">Attach</div>
<div class="row" style="letter-spacing:0.11px;left:666.8px;top:198.7px;font-size:6.75px">MONDAY MONDAY MOND...</div>
<div class="row" style="left:666.8px;top:227.7px;font-size:7.2px">Slice Result</div>
<div class="row" style="left:650.7px;top:256.1px;font-size:7.55px;letter-spacing:-0.05px">Attach</div>
<div class="row" style="letter-spacing:-0.05px;left:666.8px;top:284.5px;font-size:6.75px">SATURDAY SATURDAY SAT...</div>
<div class="row" style="left:666.8px;top:313.4px;font-size:7.2px">Slice Result</div>
<div class="row" style="left:650.7px;top:341.8px;font-size:7.55px;letter-spacing:-0.05px">Attach</div>
<div class="row" style="letter-spacing:-0.14px;left:666.8px;top:370.2px;font-size:6.75px">FRIDAY FRIDAY FRIDAY</div>
<div class="row" style="left:666.8px;top:399.2px;font-size:7.2px">Slice Result</div>
<div class="row" style="left:650.7px;top:427.6px;font-size:7.55px;letter-spacing:-0.05px">Attach</div>
<div class="row" style="letter-spacing:-0.05px;left:666.8px;top:455.9px;font-size:6.75px">THURSDAY THURSDAY TH...</div>
<div class="row" style="left:666.8px;top:484.9px;font-size:7.2px">Slice Result</div>
<div class="row" style="left:650.7px;top:513.3px;font-size:7.55px;letter-spacing:-0.05px">Attach</div>
<div class="row" style="letter-spacing:-0.1px;left:666.8px;top:541.7px;font-size:6.75px">WEDNESDAY WEDNESDAY</div>
<div class="row" style="left:666.8px;top:570.7px;font-size:7.2px">Slice Result</div>
<div class="row" style="left:650.7px;top:599.0px;font-size:7.55px;letter-spacing:-0.05px">Attach</div>

<!-- blank canvas -->
<div class="abs" style="left:615.4px;top:624px;width:151.6px;height:24.6px;background:#f4f4f4"></div>
<div class="abs" style="left:621px;top:626.6px;width:26.9px;height:18.3px;background:#fff;border:0.7px solid #8f8f8f"></div>
<div class="row" style="left:652.8px;top:632.6px;font-size:4.85px;line-height:7px;font-weight:bold;color:#333">Blank Canvas</div>
<svg class="abs" style="left:615.4px;top:649px" width="151.6" height="13" viewBox="615.4 649 151.6 13" fill="none" stroke="#c9c9c9" stroke-width="0.8" stroke-linecap="round" stroke-linejoin="round">
<rect x="625.4" y="651.2" width="6" height="6" rx="1.6"/><path d="M629 655V660H634.4V655.4H632.6"/><circle cx="629.2" cy="655.4" r="1.4"/>
<rect x="647.8" y="651.2" width="6" height="6" rx="1.6"/><circle cx="653.2" cy="656.8" r="3.2"/><path d="M660 654.6H662.4L661.2 656.2Z" fill="#cfcfcf"/>
<path d="M678.6 655.8H683.8C685.4 655.8 685.4 658 683.8 658H678.4C675.8 658 675.8 653.2 678.4 653.2H683.6C686.8 653.2 686.8 656.8 685.2 656.8"/>
<path d="M705.2 651V655.4M703.6 654L705.2 655.6L706.8 654M701.2 656L705.2 658.2L709.2 656M701.2 658L705.2 660.2L709.2 658"/>
<circle cx="731.3" cy="655.8" r="4.6" stroke-dasharray="1.4 1.5" stroke-linecap="butt"/>
</svg>
<div class="row" style="left:609.7px;width:40px;text-align:center;top:662.9px;font-size:5.2px;line-height:7px;color:#c6c6c6">Slice</div>
<div class="row" style="left:634.6px;width:40px;text-align:center;top:662.9px;font-size:5.2px;line-height:7px;color:#c6c6c6">Combine</div>
<div class="row" style="left:661.4px;width:40px;text-align:center;top:662.9px;font-size:5.2px;line-height:7px;color:#c6c6c6">Attach</div>
<div class="row" style="left:685.4px;width:40px;text-align:center;top:662.9px;font-size:5.2px;line-height:7px;color:#c6c6c6">Flatten</div>
<div class="row" style="left:711.3px;width:40px;text-align:center;top:662.9px;font-size:5.2px;line-height:7px;color:#c6c6c6">Contour</div>
<!-- banner -->
<div class="abs" style="left:616px;top:672.7px;width:150.8px;height:25.7px;background:#104ac4;border-bottom-right-radius:2px"></div>
<svg class="abs" style="left:622px;top:678px" width="20" height="16" viewBox="622 678 20 16"><path d="M624.2 680.4H639.8L637.2 684.6L636.4 691.4L624.2 691.8Z" fill="#1cb06c"/><path d="M629.4 687.6V684.6H633V687.6ZM630.2 684.4C630.2 682.8 632.2 682.8 632.2 684.4" fill="none" stroke="#e9f7ef" stroke-width="0.8"/></svg>
<div class="row" style="left:644.4px;top:681.6px;font-size:7.1px;line-height:9px;color:#fff;font-weight:bold;letter-spacing:-0.2px">Want $10 off + FREE shipping?</div>
<div class="abs" style="left:767px;top:0;width:1px;height:21px;background:#aaa"></div>
<div class="abs" style="left:767px;top:21px;width:1px;height:679px;background:#777375"></div>
<div class="abs" style="left:0;top:698.6px;width:768px;height:1.4px;background:#63351f"></div>
<div class="abs" style="left:0;top:698.6px;width:75px;height:1.4px;background:#1f4c5e"></div>
</div>
</body></html>
